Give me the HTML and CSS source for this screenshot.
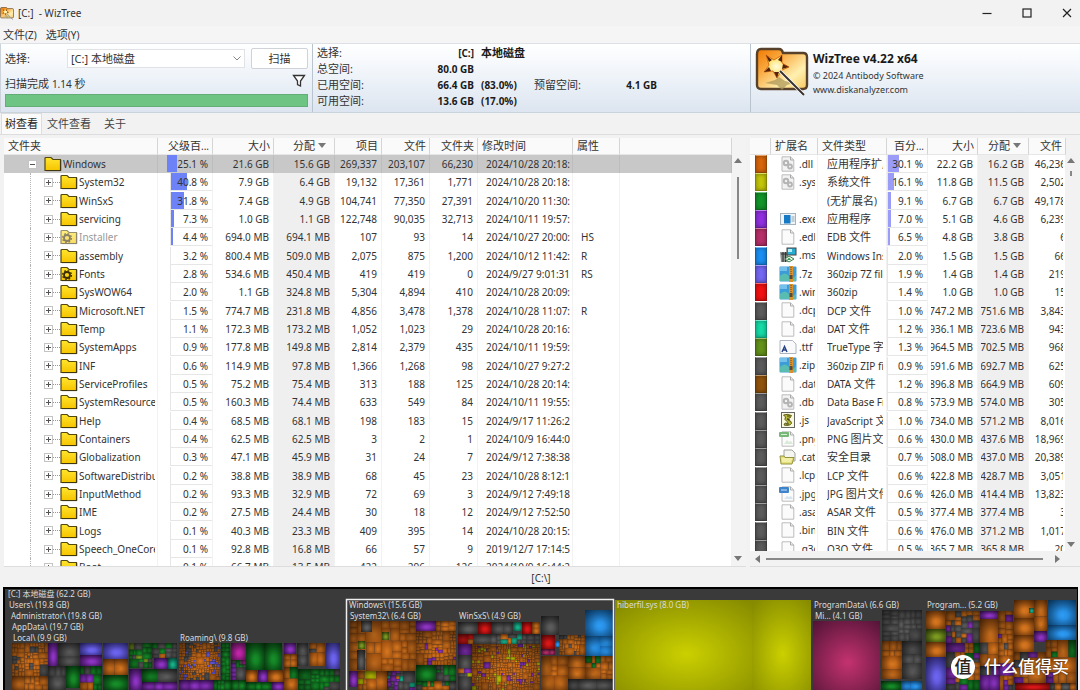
FILE: index.html
```html
<!DOCTYPE html>
<html lang="zh-CN">
<head>
<meta charset="utf-8">
<meta name="viewport" content="width=device-width, initial-scale=1">
<title>[C:] - WizTree</title>
<link rel="stylesheet" href="styles.css">
</head>
<body>
<svg class="defs" aria-hidden="true">
  <defs>
    <linearGradient id="fold" x1="0" y1="0" x2="0" y2="1"><stop offset="0" stop-color="#ffe52e"/><stop offset="1" stop-color="#f6c400"/></linearGradient>
    <linearGradient id="logoback" x1="0" y1="0" x2="1" y2="1"><stop offset="0" stop-color="#f07800"/><stop offset=".3" stop-color="#f9a53a"/><stop offset=".7" stop-color="#fff0b0"/><stop offset="1" stop-color="#f8c860"/></linearGradient>
    <radialGradient id="starfill"><stop offset="0" stop-color="#fffce0"/><stop offset="1" stop-color="#ffd83c"/></radialGradient>
    <symbol id="logo" viewBox="0 0 54 50">
      <path d="M2 7Q2 2 6 2H24Q27 2 28 6H48Q52 6 52 10V38Q52 42 48 42H6Q2 42 2 38Z" fill="url(#logoback)" stroke="#57412a" stroke-width="2.4"/>
      <path d="M10 36L20 33 24 30 30 34 39 36 32 38 27 43 22 38Z" fill="#a89455" opacity=".7"/>
      <path d="M11 8L19 13 27 8 27 16 34 20 27 23 22 31 18 24 9 25 14 18Z" fill="url(#starfill)" stroke="#d86f10"/>
      <path d="M11 8L17 13 14 15ZM27 8L27 15 23 13ZM34 20L27 22 28 17ZM22 31L19 25 24 25ZM9 25L14 20 16 24Z" fill="#54220f"/>
      <path d="M25 24L49 48" stroke="#fff" stroke-width="3.4"/>
      <path d="M25 24L49 48" stroke="#38302c" stroke-width="2"/>
    </symbol>
    <symbol id="folder" viewBox="0 0 18 16">
      <path d="M1 2.5Q1 1.5 2 1.5H7L9 3.5H16.5V14.5H1Z" fill="url(#fold)" stroke="#54480c" stroke-width="1.2"/>
      <path d="M16.7 4V14.6H2" fill="none" stroke="#3d3510" stroke-width="1"/>
    </symbol>
    <symbol id="gear" viewBox="0 0 18 16">
      <use href="#folder"/>
      <circle cx="7" cy="9" r="3" fill="none" stroke="#3c3000" stroke-width="1.8"/>
      <circle cx="7" cy="9" r="4.4" fill="none" stroke="#3c3000" stroke-width="1.4" stroke-dasharray="1.7 1.755"/>
    </symbol>
    <symbol id="i-page" viewBox="0 0 18 16">
      <path d="M3 .8H11.5L14.8 4V15.2H3Z" fill="#fbfbfb" stroke="#bcbcbc"/><path d="M11.5 .8V4H14.8" fill="none" stroke="#a9a9a9"/>
    </symbol>
    <symbol id="i-cog" viewBox="0 0 18 16">
      <path d="M3 .8H11.5L14.8 4V15.2H3Z" fill="#f2f2f2" stroke="#bcbcbc"/><path d="M11.5 .8V4H14.8" fill="none" stroke="#a9a9a9"/>
      <circle cx="7" cy="7" r="2.2" fill="none" stroke="#b4b4b4" stroke-width="2"/><circle cx="11" cy="10.500" r="2" fill="none" stroke="#b4b4b4" stroke-width="1.8"/>
    </symbol>
    <symbol id="i-exe" viewBox="0 0 18 16">
      <rect x="1.5" y="2.5" width="15" height="11" fill="#eef4f8" stroke="#a3b4c0"/><rect x="5" y="4" width="6.5" height="8.5" fill="#1579c6"/><path d="M12.5 6H15.5M12.5 8H15.5M12.5 10H15.5" stroke="#8fa5b5"/>
    </symbol>
    <symbol id="i-msi" viewBox="0 0 18 16">
      <path d="M1 5H9V15H2Z" fill="#8b918d"/><path d="M2 7H8M4 5V15M6.5 5V15" stroke="#333"/>
      <rect x="8" y="1" width="9" height="7" fill="#28acd2" stroke="#444"/><path d="M9 2H13V5H9Z" fill="#b8eef8"/>
      <path d="M6 12L10 9 15 12 10 15Z" fill="#f0f6ee" stroke="#38804a"/><path d="M8 13L10 10.500 12 13Z" fill="#2f9447"/>
    </symbol>
    <symbol id="i-zip" viewBox="0 0 18 16">
      <rect x=".5" y=".5" width="17" height="15" rx="1" fill="#3c9cd8"/><path d="M1 10Q6 5 10 10T17 9V15H1Z" fill="#58bdb0"/><path d="M1 1H8V5H1Z" fill="#74bfeb"/>
      <rect x="10" y="0" width="4" height="16" fill="#d9922d"/><path d="M12 1V11" stroke="#6c4719" stroke-dasharray="1 1"/><rect x="10.500" y="9" width="3" height="4" fill="#594a35"/>
    </symbol>
    <symbol id="i-ttf" viewBox="0 0 18 16">
      <path d="M1 1.5H13.500L17 5V14.500H1Z" fill="#fafafa" stroke="#aeb4c2"/><path d="M3 13L5.500 7.500 8 13M4 11H7" fill="none" stroke="#243f88" stroke-width="1.400"/>
    </symbol>
    <symbol id="i-js" viewBox="0 0 18 16">
      <rect x="2.500" y=".5" width="13" height="15" fill="#faf8df" stroke="#666"/><path d="M4.500 3Q8 1.500 12.500 3.500L11 6Q7 6 9 8Q13 9 12.500 11.500Q10 14.500 5 13L6 11Q10 12 8 9.500Q4.500 7.500 6.500 5Z" fill="#b9b838" stroke="#45430c" stroke-width=".8"/><path d="M8 4H11M8 7L11 8M7 12H10" stroke="#45430c"/>
    </symbol>
    <symbol id="i-png" viewBox="0 0 18 16">
      <use href="#i-page"/><rect x="0" y="1" width="10" height="5" rx="1" fill="#79b779"/><path d="M2 3.500H8" stroke="#d8efd8"/><path d="M5 13L8 9 10 11 12 10 14 13Z" fill="#d9ead8"/>
    </symbol>
    <symbol id="i-jpg" viewBox="0 0 18 16">
      <use href="#i-page"/><rect x="0" y="1" width="10" height="6" rx="1" fill="#3d84cc"/><path d="M2 4H8" stroke="#c8e0fa"/><path d="M5 13L8 10 10 11 12 10 14 13Z" fill="#d5e5f1"/>
    </symbol>
    <symbol id="i-cat" viewBox="0 0 18 16">
      <path d="M5 1H13L16 4V12H5Z" fill="#f4f4f1" stroke="#a2a2a0"/><path d="M1 7H5L6 8.500H15L13 15H2Z" fill="#e5e17f" stroke="#95933f"/><path d="M3 10H13M3 12H12" stroke="#fffccc"/>
    </symbol>
  </defs>
</svg>

<header class="titlebar">
  <svg class="app-icon" viewBox="0 0 54 50" aria-hidden="true"><use href="#logo"/></svg>
  <h1 class="title">[C:]&nbsp; - WizTree</h1>
  <button class="win-btn" aria-label="最小化"><svg viewBox="0 0 10 10"><path d="M.5 5.500H9.500"/></svg></button>
  <button class="win-btn" aria-label="最大化"><svg viewBox="0 0 10 10"><rect x="1" y="1" width="8" height="8"/></svg></button>
  <button class="win-btn" aria-label="关闭"><svg viewBox="0 0 10 10"><path d="M1 1L9 9M9 1L1 9"/></svg></button>
</header>
<nav class="menu">
  <button class="menu-item">文件<span class="lat">(Z)</span></button>
  <button class="menu-item">选项<span class="lat">(Y)</span></button>
</nav>

<section class="summary">
  <div class="scan">
    <div class="scan-row">
      <label class="scan-label" for="drive">选择:</label>
      <span class="drive-wrap">
        <select class="drive" id="drive"><option>[C:] 本地磁盘</option></select>
        <svg class="chevron" viewBox="0 0 8 5"><path d="M.5 .5L4 4 7.500 .5"/></svg>
      </span>
      <button class="scan-btn">扫描</button>
    </div>
    <div class="status-row">
      <span>扫描完成 <span class="lat">1.14</span> 秒</span>
      <button class="filter" aria-label="筛选"><svg viewBox="0 0 14 14"><path d="M1.500 1.500H12.500L8.500 7V12L5.500 10.500V7Z"/></svg></button>
    </div>
    <div class="progress" role="progressbar" aria-label="扫描进度" aria-valuenow="100"></div>
  </div>
  <dl class="space">
    <dt>选择:</dt><dd class="num">[C:]</dd><dd class="cjk-b">本地磁盘</dd>
    <dt>总空间:</dt><dd class="num">80.0 GB</dd><dd></dd>
    <dt>已用空间:</dt><dd class="num">66.4 GB</dd><dd>(83.0%)</dd><dt>预留空间:</dt><dd class="num">4.1 GB</dd>
    <dt>可用空间:</dt><dd class="num">13.6 GB</dd><dd>(17.0%)</dd>
  </dl>
  <div class="about">
    <svg class="about-logo" viewBox="0 0 54 50" aria-hidden="true"><use href="#logo"/></svg>
    <div>
      <h2 class="about-name">WizTree v4.22 x64</h2>
      <p class="about-line">© 2024 Antibody Software</p>
      <p class="about-line"><a class="site" href="#site">www.diskanalyzer.com</a></p>
    </div>
  </div>
</section>

<nav class="tabs">
  <button class="tab tab-on">树查看</button>
  <button class="tab">文件查看</button>
  <button class="tab">关于</button>
</nav>

<main class="panes">
  <section class="pane tree-pane">
    <div class="clip">
      <table class="grid tree">
        <colgroup><col class="w154"><col class="w55"><col class="w61"><col class="w61"><col class="w47"><col class="w48"><col class="w48"><col class="w95"><col class="w47"><col></colgroup>
        <thead><tr><th>文件夹</th><th class="r">父级百<span class="lat">...</span></th><th class="r">大小</th><th class="r">分配<i class="sort"></i></th><th class="r">项目</th><th class="r">文件</th><th class="r">文件夹</th><th>修改时间</th><th>属性</th><th></th></tr></thead>
        <tbody id="tree"></tbody>
      </table>
    </div>
    <div class="vbar"><i class="up"></i><i class="thumb"></i><i class="down"></i></div>
  </section>
  <section class="pane type-pane">
    <div class="clip">
      <table class="grid types">
        <colgroup><col class="w21"><col class="w47"><col class="w69"><col class="w41"><col class="w50"><col class="w51"><col></colgroup>
        <thead><tr><th></th><th>扩展名</th><th>文件类型</th><th class="r">百分<span class="lat">...</span></th><th class="r">大小</th><th class="r">分配<i class="sort"></i></th><th class="r">文件</th></tr></thead>
        <tbody id="types"></tbody>
      </table>
    </div>
    <div class="vbar vbar-slim"><i class="up"></i><i class="thumb thumb-short"></i><i class="down"></i></div>
    <div class="hbar"><i class="left"></i><i class="hthumb"></i><i class="right"></i></div>
  </section>
</main>

<div class="path">[C:\]</div>
<footer class="map" id="map">
  <div class="watermark"><span class="mark">值</span>什么值得买</div>
</footer>
<script src="app.js"></script>
</body>
</html>
```

FILE: styles.css
```css
* { box-sizing: border-box; }
html { height: 100%; }
body {
  margin: 0; height: 100%; min-height: 500px; display: flex; flex-direction: column; overflow: hidden;
  background: #f2f2f2; color: #333; font: 11px/16px "Noto Sans", "Noto Sans CJK SC", sans-serif;
}
button, select { font: inherit; color: inherit; border: 0; background: none; padding: 0; margin: 0; }
h1, h2, p, dl, dd { margin: 0; }
.defs { position: absolute; width: 0; height: 0; }
.lat { font-size: 10px; }
.cj { font-size: 11px; }

.titlebar { display: flex; align-items: center; height: 26px; flex: none; }
.app-icon { width: 14px; height: 13px; }
.title { flex: 1; margin-left: 4px; font-size: 10px; font-weight: 400; }
.win-btn { width: 40px; height: 24px; display: grid; place-items: center; }
.win-btn:last-child { margin-right: -7px; }
.win-btn svg { width: 10px; height: 10px; fill: none; stroke: #222; stroke-width: 1.2; }

.menu { display: flex; gap: 9px; height: 17px; padding-left: 3px; flex: none; background: #f5f5f5; align-items: center; }

.summary {
  display: grid; grid-template-columns: 312px minmax(0, 438fr) minmax(0, 330fr); flex: none; height: 70px;
  background: linear-gradient(#fff, #f5f8fc 30%, #dce5f0); border-top: 1px solid #dde1e6; border-bottom: 1px solid #c9d3dc;
}
.scan { padding: 4px 4px 0; border-left: 1px solid #ccd2d9; }
.scan-row { display: flex; align-items: center; height: 21px; }
.scan-label { width: 62px; }
.drive-wrap { position: relative; flex: 1; height: 19px; margin-right: 6px; }
.drive { width: 100%; height: 19px; appearance: none; padding-left: 3px; font-size: 11px; line-height: 17px; background: #fff; border: 1px solid #e0e2e5; }
.chevron { position: absolute; right: 4px; top: 7px; width: 8px; height: 5px; fill: none; stroke: #888; pointer-events: none; }
.scan-btn { width: 57px; height: 21px; background: #fff; border: 1px solid #cfd2d6; border-radius: 2px; }
.status-row { display: flex; justify-content: space-between; align-items: flex-end; height: 24px; padding-bottom: 1px; }
.filter { width: 14px; height: 22px; margin-right: 2px; }
.filter svg { display: block; width: 14px; height: 14px; fill: #fff; stroke: #333; stroke-width: 1.3; }
.progress { height: 13px; background: #6ec482; border: 1px solid #62ae76; margin-top: 1px; }

.space {
  display: grid; grid-template-columns: 68px 89px 60px 60px 63px; grid-auto-rows: 16px; align-content: start;
  padding: 1px 0 0 4px; border-left: 1px solid #b9c4cf;
}
.space dt { grid-column: 1; }
.space dd { font-weight: 700; font-size: 10px; color: #1a1a1a; padding-left: 7px; white-space: nowrap; }
.space .num { text-align: right; padding: 0; }
.space .cjk-b { font-size: 11px; }
.space dd + dt:nth-of-type(4) { grid-column: 4; }
.space dd:nth-of-type(7) { grid-column: 5; }

.about { display: flex; gap: 4px; padding: 3px 0 0 4px; border-left: 1px solid #b9c4cf; }
.about-logo { width: 54px; height: 50px; }
.about-name { font-size: 12px; line-height: 16px; margin: 4px 0 2px; color: #1a1a1a; }
.about-line { font-size: 9px; line-height: 14px; }
.site { color: inherit; text-decoration: none; }

.tabs { display: flex; height: 22px; flex: none; padding-left: 1px; border-bottom: 1px solid #ddd; }
.tab { padding: 0 8px 0 5px; color: #444; }
.tab-on { padding: 0 3px; color: #222; background: #fafafa; border: 1px solid #ddd; border-bottom: 0; }

.panes { flex: 1; min-height: 0; display: grid; grid-template-columns: minmax(0, 742fr) minmax(0, 330fr); gap: 4px; padding: 3px 0 0 4px; }
.pane { display: grid; min-height: 0; min-width: 0; border-bottom: 1px solid #ddd; background: #f2f2f2; }
.tree-pane { grid-template-columns: minmax(0, 1fr) 14px; background: #f3f3f3; }
.type-pane { grid-template-columns: minmax(0, 1fr) 14px; grid-template-rows: minmax(0, 1fr) 15px; }
.clip { overflow: hidden; background: #fff; min-height: 0; }
.grid { width: 100%; table-layout: fixed; border-collapse: separate; border-spacing: 0; font-size: 10px; line-height: 16px; }
.grid th { height: 17px; padding: 0 4px; font-weight: 400; font-size: 11px; text-align: left; white-space: nowrap; background: #fafafa; border-right: 1px solid #d5d5d5; border-bottom: 1px solid #e6e6e6; }
.grid th.r { padding: 0 3px 0 0; text-align: right; }
.grid .r { text-align: right; }
.grid td { height: 18px; padding: 0 4px 0 8px; border-right: 1px solid #f2f2f2; white-space: nowrap; }
.grid tbody tr:nth-child(3n) td { height: 19px; }
.w154 { width: 154px; } .w55 { width: 55px; } .w61 { width: 61px; } .w47 { width: 47px; } .w48 { width: 48px; }
.w95 { width: 95px; } .w21 { width: 21px; } .w69 { width: 69px; } .w41 { width: 41px; } .w50 { width: 50px; } .w51 { width: 51px; }
.cut { display: flex; overflow: hidden; height: 16px; }
.r .cut { justify-content: flex-end; }
.tree td.date { padding-left: 8px; padding-right: 2px; }
.grid td.tight { padding-left: 2px; padding-right: 4px; }
.grid td.alloc { background: #efefef; }
.sort { display: inline-block; margin: 0 5px 2px 3px; border: 4px solid transparent; border-top: 5px solid #777; border-bottom: 0; }
.types .sort { margin-right: 4px; }
.types td .cut { margin-left: -5px; }
.types td.ext .cut, .types td.kind .cut, .types td.count .cut { margin-left: 0; }

.tree .sel td { background: #c8c8c8; border-right-color: #bdbdbd; }
.tree td.name { padding: 0 2px 0 26px; }
.branch { display: flex; align-items: center; height: 18px; overflow: hidden; border-left: 1px dotted #b5b5b5; padding-left: 13px; }
.sel .branch { border-color: transparent; padding-left: 0; margin-left: -3px; }
.twist { position: relative; flex: none; width: 9px; height: 9px; border: 1px solid #c4c4c4; background: #fff; }
.twist::before { content: ""; position: absolute; left: 1px; right: 1px; top: 3px; height: 1px; background: #555; }
.twist::after { content: ""; position: absolute; top: 1px; bottom: 1px; left: 3px; width: 1px; background: #555; }
.sel .twist::after { display: none; }
.link { flex: none; width: 7px; border-top: 1px dotted #999; }
.sel .link { border-color: transparent; }
.folder { flex: none; width: 18px; height: 16px; margin-right: 1px; }
.faded .folder { opacity: .6; }
.faded .label { color: #999; }

.grid td.pct { padding: 0; }
.box { position: relative; display: block; height: 18px; margin-left: 12px; padding-right: 4px; text-align: right; line-height: 18px; border: 1px solid #e6e6e6; border-width: 0 0 1px 1px; }
.bar { position: absolute; left: 0; top: 0; bottom: 0; background: #6c82f6; }
.val { position: relative; }
.sel .box { margin-left: 8px; border-color: transparent; }
.types .box { margin-left: 0; }
.types .bar { background: #9a9cf8; }

.grid td.swatch { padding: 0 4px 0 5px; border: 0; }
.chip { display: block; height: 18px; border: 1px solid #0005; border-top-color: #fff6; box-shadow: inset 0 0 4px #0006; }
.types td.ext { padding: 0 2px 0 8px; }
.types td.ext .cut { height: 17px; }
.ficon { flex: none; width: 18px; height: 16px; margin-right: 2px; }
.types td.kind { padding: 0 3px 0 9px; }
.types td.count { padding: 0 2px 0 4px; }
.types td.count .cut span { margin-right: -3px; }

.vbar { display: flex; flex-direction: column; align-items: center; padding: 20px 2px 5px 0; }
.up, .down { border: 4px solid transparent; }
.up { border-top: 0; border-bottom: 5px solid #777; }
.down { border-bottom: 0; border-top: 5px solid #777; margin-top: auto; }
.thumb { width: 2px; height: 82px; margin-top: 14px; background: #888; }
.thumb-short { height: 5px; margin-top: 8px; }
.vbar-slim { padding-bottom: 4px; padding-right: 4px; }
.hbar { grid-column: 1 / -1; display: flex; align-items: center; gap: 6px; padding: 0 20px 0 5px; }
.left, .right { border: 4px solid transparent; }
.left { border-left: 0; border-right: 5px solid #777; }
.right { border-right: 0; border-left: 5px solid #777; }
.hthumb { flex: 1; height: 2px; margin-right: 6px; background: #888; }

.path { flex: none; height: 20px; line-height: 22px; font-size: 10px; text-align: center; padding-left: 2px; }
.map { position: relative; flex: none; height: 103px; margin: 0 2px 0 3px; overflow: hidden; background: #3a3a3a; border: 2px solid #000; border-width: 2px 1px 0 2px; }
.cells { display: block; width: 100%; height: 101px; }
.map-label { position: absolute; font-size: 8px; line-height: 11px; color: #dcdcdc; white-space: nowrap; }
.watermark { position: absolute; right: 8px; bottom: 11px; display: flex; align-items: center; gap: 8px; color: #fff; font-size: 17px; line-height: 24px; font-weight: 500; text-shadow: 0 0 2px #0008; }
.mark { width: 24px; height: 24px; margin-right: 1px; border-radius: 12px; background: #fff; color: #2c2418; font-size: 17px; line-height: 23px; text-align: center; text-shadow: none; }
```

FILE: app.js
```js
const folders = `Windows|25.1|21.6 GB|15.6 GB|269,337|203,107|66,230|2024/10/28 20:18:01|
System32|40.8|7.9 GB|6.4 GB|19,132|17,361|1,771|2024/10/28 20:18:01|
WinSxS|31.8|7.4 GB|4.9 GB|104,741|77,350|27,391|2024/10/20 11:30:11|
servicing|7.3|1.0 GB|1.1 GB|122,748|90,035|32,713|2024/10/11 19:57:22|
Installer|4.4|694.0 MB|694.1 MB|107|93|14|2024/10/27 20:00:50|HS
assembly|3.2|800.4 MB|509.0 MB|2,075|875|1,200|2024/10/12 11:42:01|R
Fonts|2.8|534.6 MB|450.4 MB|419|419|0|2024/9/27 9:01:31|RS
SysWOW64|2.0|1.1 GB|324.8 MB|5,304|4,894|410|2024/10/28 20:09:50|
Microsoft.NET|1.5|774.7 MB|231.8 MB|4,856|3,478|1,378|2024/10/28 11:07:50|R
Temp|1.1|172.3 MB|173.2 MB|1,052|1,023|29|2024/10/28 20:16:22|
SystemApps|0.9|177.8 MB|149.8 MB|2,814|2,379|435|2024/10/11 19:59:22|
INF|0.6|114.9 MB|97.8 MB|1,366|1,268|98|2024/10/27 9:27:25|
ServiceProfiles|0.5|75.2 MB|75.4 MB|313|188|125|2024/10/28 20:14:40|
SystemResources|0.5|160.3 MB|74.4 MB|633|549|84|2024/10/11 19:55:40|
Help|0.4|68.5 MB|68.1 MB|198|183|15|2024/9/17 11:26:28|
Containers|0.4|62.5 MB|62.5 MB|3|2|1|2024/10/9 16:44:02|
Globalization|0.3|47.1 MB|45.9 MB|31|24|7|2024/9/12 7:38:38|
SoftwareDistribution|0.2|38.8 MB|38.9 MB|68|45|23|2024/10/28 8:12:17|
InputMethod|0.2|93.3 MB|32.9 MB|72|69|3|2024/9/12 7:49:18|
IME|0.2|27.5 MB|24.4 MB|30|18|12|2024/9/12 7:52:50|
Logs|0.1|40.3 MB|23.3 MB|409|395|14|2024/10/28 20:15:10|
Speech_OneCore|0.1|92.8 MB|16.8 MB|66|57|9|2019/12/7 17:14:52|
Boot|0.1|66.7 MB|13.5 MB|422|296|126|2024/10/9 16:44:20|`.split("\n").map(l => l.split("|"));

const types = `#d9670c|cog|.dll|应用程序扩展|30.1|22.2 GB|16.2 GB|46,236
#c3c60a|cog|.sys|系统文件|16.1|11.8 GB|11.5 GB|2,502
#12962a|||(无扩展名)|9.1|6.7 GB|6.7 GB|49,178
#9030e0|exe|.exe|应用程序|7.0|5.1 GB|4.6 GB|6,239
#b8306a|page|.edb|EDB 文件|6.5|4.8 GB|3.8 GB|6
#1a90f4|msi|.msi|Windows Installer|2.0|1.5 GB|1.5 GB|66
#7468f4|zip|.7z|360zip 7Z file|1.9|1.4 GB|1.4 GB|219
#f41010|zip|.wim|360zip|1.4|1.0 GB|1.0 GB|15
#5c5c5c|page|.dcp|DCP 文件|1.0|747.2 MB|751.6 MB|3,843
#16dca8|page|.dat|DAT 文件|1.2|936.1 MB|723.6 MB|943
#64931a|ttf|.ttf|TrueType 字体|1.3|964.5 MB|702.5 MB|968
#5c5c5c|zip|.zip|360zip ZIP file|0.9|691.6 MB|692.7 MB|625
#92540c|page|.data|DATA 文件|1.2|896.8 MB|664.9 MB|609
#5c5c5c|cog|.db|Data Base File|0.8|573.9 MB|574.0 MB|305
#5c5c5c|js|.js|JavaScript 文件|1.0|734.0 MB|571.2 MB|8,016
#5c5c5c|png|.png|PNG 图片文件|0.6|430.0 MB|437.6 MB|18,969
#5c5c5c|cat|.cat|安全目录|0.7|508.0 MB|437.0 MB|20,389
#5c5c5c|page|.lcp|LCP 文件|0.6|422.8 MB|428.7 MB|3,051
#5c5c5c|jpg|.jpg|JPG 图片文件|0.6|426.0 MB|414.4 MB|13,823
#5c5c5c|page|.asar|ASAR 文件|0.5|377.4 MB|377.4 MB|3
#5c5c5c|page|.bin|BIN 文件|0.6|476.0 MB|371.2 MB|1,017
#5c5c5c|page|.q3o|Q3O 文件|0.5|365.7 MB|365.8 MB|20`.split("\n").map(l => l.split("|"));

const cjk = s => s.replace(/[\u4e00-\u9fff]+/g, m => `<span class="cj">${m}</span>`);
const cut = s => `<div class="cut"><span>${s}</span></div>`;
const bar = (v, k) => `<td class="pct"><span class="box"><i class="bar" style="width:${v * k < 1.7 ? 0 : Math.round(v * k)}px"></i><span class="val">${v} %</span></span></td>`;

document.getElementById("tree").innerHTML = folders.map((f, i) => {
  const icon = f[0] === "Installer" || f[0] === "Fonts" ? "gear" : "folder";
  const cls = i === 0 ? "sel" : f[0] === "Installer" ? "faded" : "";
  return `<tr class="${cls}"><td class="name"><div class="branch"><button class="twist" aria-label="${i ? "展开" : "折叠"}"></button><i class="link"></i><svg class="folder" viewBox="0 0 18 16"><use href="#${icon}"/></svg><span class="label">${f[0]}</span></div></td>`
    + bar(f[1], .4) + `<td class="r">${f[2]}</td><td class="r alloc">${f[3]}</td><td class="r tight">${f[4]}</td><td class="r tight">${f[5]}</td><td class="r tight">${f[6]}</td><td class="date">${cut(f[7])}</td><td>${f[8]}</td><td></td></tr>`;
}).join("");

document.getElementById("types").innerHTML = types.map(t =>
  `<tr><td class="swatch"><i class="chip" style="background:${t[0]}"></i></td><td class="ext"><div class="cut">${t[1] ? `<svg class="ficon" viewBox="0 0 18 16"><use href="#i-${t[1]}"/></svg>` : ""}<span>${t[2]}</span></div></td><td class="kind">${cut(cjk(t[3]))}</td>`
  + bar(t[4], .36) + `<td class="r">${cut(t[5])}</td><td class="r alloc">${cut(t[6])}</td><td class="r count">${cut(t[7])}</td></tr>`
).join("");

/* Treemap: o orange, g green, p purple, b blue, v violet-blue, k grey, y yellow, c crimson, r red, t teal, m magenta, l olive */
const tones = {
  o: ["#d87820", "#93480c"], g: ["#17902a", "#085014"], p: ["#9236c8", "#521878"], b: ["#2e9cf4", "#1468b4"],
  v: ["#6f66f2", "#443cae"], k: ["#5e5e5e", "#363636"], y: ["#cbd000", "#858a00"], c: ["#c43270", "#561538"],
  r: ["#e01818", "#900a0a"], t: ["#18b48c", "#0c705a"], m: ["#c426ac", "#7c1870"], l: ["#809e22", "#48600e"]
};
/* x, y, width, height, tone mix, smallest cell */
const blocks = [
  [12,643,36,33,"ooooooook",3],[12,676,36,14,"oooooko",5],[48,643,10,23,"p",40],[58,643,22,23,"kkkkkp",6],[48,666,18,24,"kkkkg",6],[66,666,14,22,"g",40],
  [80,643,22,12,"v",14],[80,655,22,11,"p",40],[80,666,22,24,"kopokg",5],[103,643,25,16,"v",40],[103,659,25,16,"ooo",12],[103,675,25,15,"g",40],
  [129,643,23,25,"gglkgl",4],[152,643,25,15,"kkgok",5],[154,658,14,11,"p",40],[168,658,9,11,"tko",4],[129,669,13,21,"p",40],[142,669,35,13,"kkkg",5],[142,682,35,8,"p",12],
  [179,643,41,37,"ooooookv",2],[179,680,34,10,"p",10],[213,680,18,10,"g",4],[221,643,9,37,"gggk",3],[231,643,15,17,"m",40],[231,660,15,20,"pgpmk",4],[231,680,15,10,"g",8],
  [246,643,18,27,"g",40],[264,643,18,27,"g",40],[246,670,11,12,"o",40],[258,670,10,12,"p",40],[268,670,15,12,"gko",5],[246,682,26,8,"g",8],[272,682,12,8,"p",40],
  [284,643,12,11,"p",40],[284,654,13,13,"oooo",6],[297,643,11,23,"k",9],[309,643,16,23,"oooook",4],[326,643,14,26,"v",40],[284,667,14,23,"oog",8],[298,669,42,21,"gggggk",4],
  [350,621,66,50,"o",7],[361,621,11,11,"k",40],[382,632,7,8,"l",40],[358,641,7,8,"l",40],[357,650,8,20,"k",40],
  [349,671,9,16,"p",40],[358,671,29,19,"oooy",5],[387,671,28,19,"pkpotk",3],[416,621,20,10,"p",40],[436,621,20,10,"o",5],[416,631,40,34,"oooooooop",3],[416,665,20,16,"g",12],[436,665,20,16,"kkkg",4],[416,681,40,9,"ogk",4],
  [458,622,20,12,"k",12],[478,622,13,12,"r",40],[491,622,22,12,"k",9],[513,622,9,9,"t",40],[522,622,10,12,"r",40],[532,622,8,12,"o",5],[458,634,82,10,"kgokotrk",5],[458,644,14,46,"kokkpy",4],[472,644,68,46,"oooooooooooyp",2],
  [541,616,18,19,"k",40],[541,635,14,14,"r",40],[541,649,14,6,"c",8],[559,635,26,20,"oooook",3],[555,641,5,6,"b",40],[541,656,27,34,"oooooo",5],[585,610,28,26,"b",40],[585,636,28,20,"b",9],[568,656,17,23,"oo",12],[585,656,28,23,"ooog",5],[568,679,45,11,"kkt",7],
  [615,600,137,90,"y",200],[752,600,59,90,"y",200],
  [813,621,67,69,"c",200],[882,610,40,31,"k",5],[882,641,20,38,"oooo",7],[902,641,20,38,"kkkk",7],[881,681,20,9,"g",40],[901,681,21,9,"b",9],
  [926,611,19,18,"o",40],[926,629,20,13,"l",12],[926,642,20,15,"o",40],[926,657,20,33,"v",40],[946,611,34,32,"ookkpo",5],[946,643,34,47,"ooookkpg",5],[980,611,18,8,"p",40],[980,619,20,47,"oooook",7],[998,611,15,79,"oookoop",5],[980,666,20,24,"ppk",9],
  [1014,600,20,18,"o",40],[1029,608,5,5,"t",40],[1014,618,20,17,"o",40],[1014,635,20,17,"o",40],[1034,600,13,31,"oko",6],[1034,631,13,11,"p",40],[1048,600,28,25,"b",40],[1048,625,28,15,"b",40],[1014,652,32,31,"oookp",7],[1046,640,30,43,"ooookgp",5],[1015,683,35,7,"r",40],[1050,683,26,7,"kpo",6]
];
let seed = 7;
const rand = () => (seed = (seed * 16807) % 2147483647) / 2147483647;
const cells = [];
function split(x, y, w, h, mix, min) {
  const long = Math.max(w, h);
  if (long > min * 1.7 && (long > min * 4 || rand() < .8)) {
    const r = .35 + rand() * .3;
    if (w > h) { split(x, y, w * r, h, mix, min); split(x + w * r, y, w * (1 - r), h, mix, min); }
    else { split(x, y, w, h * r, mix, min); split(x, y + h * r, w, h * (1 - r), mix, min); }
    return;
  }
  const tone = mix[Math.floor(rand() * mix.length)];
  cells.push(`<rect x="${x.toFixed(1)}" y="${y.toFixed(1)}" width="${w.toFixed(1)}" height="${h.toFixed(1)}" fill="url(#t-${tone})"/>`);
}
blocks.forEach(b => {
  split(...b);
  if (b[5] < 100) cells.push(`<rect x="${b[0]}" y="${b[1]}" width="${b[2]}" height="${b[3]}" fill="url(#shade)"/>`);
});
const grads = Object.entries(tones).map(([k, c]) =>
  `<radialGradient id="t-${k}" cx=".52" cy=".6" r=".75"><stop offset="0" stop-color="${c[0]}"/><stop offset="1" stop-color="${c[1]}"/></radialGradient>`).join("")
  + `<radialGradient id="shade" cx=".55" cy=".6" r=".8"><stop offset=".2" stop-color="#000" stop-opacity="0"/><stop offset="1" stop-color="#000" stop-opacity=".55"/></radialGradient>`;
const labels = [
  [8,588,"[C:] 本地磁盘 (62.2 GB)"],[9,599,"Users\\ (19.8 GB)"],[11,610,"Administrator\\ (19.8 GB)"],[12,621,"AppData\\ (19.7 GB)"],[13,632,"Local\\ (9.9 GB)"],[180,632,"Roaming\\ (9.8 GB)"],
  [349,599,"Windows\\ (15.6 GB)"],[350,610,"System32\\ (6.4 GB)"],[459,610,"WinSxS\\ (4.9 GB)"],[617,599,"hiberfil.sys (8.0 GB)"],
  [814,599,"ProgramData\\ (6.6 GB)"],[815,610,"Mi... (4.1 GB)"],[927,599,"Program... (5.2 GB)"]
];
document.getElementById("map").insertAdjacentHTML("afterbegin",
  `<svg class="cells" viewBox="5 589 1072 101" preserveAspectRatio="none" aria-hidden="true"><defs>${grads}</defs>${cells.join("")}<path d="M346.500 690V599.500H613.500V690" fill="none" stroke="#eee" stroke-width="1.500"/></svg>`
  + labels.map(l => `<span class="map-label" style="left:${((l[0] - 5) / 10.72).toFixed(2)}%;top:${l[1] - 589}px">${l[2]}</span>`).join(""));
```
